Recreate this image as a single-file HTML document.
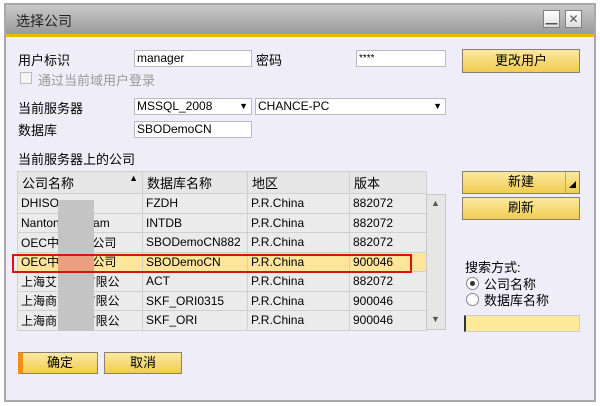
<!DOCTYPE html><html><head><meta charset="utf-8"><style>
*{box-sizing:border-box;margin:0;padding:0}
body{width:600px;height:406px;background:#fff;font-family:"Liberation Sans","Noto Sans CJK SC",sans-serif;font-size:13px;color:#000;position:relative;overflow:hidden}
.a{position:absolute}
#win{left:4px;top:3px;width:592px;height:399px;border:2px solid #a9a9a9;background:#efeef8}
#title{left:6px;top:5px;width:588px;height:29px;background:linear-gradient(#c9c9c9,#9a9a9a)}
#orange{left:6px;top:34px;width:588px;height:3px;background:#f2b400}
.tb{width:17px;height:18px;border:1px solid #808080;background:linear-gradient(#fff,#ddd);font-size:12px;text-align:center;line-height:16px;color:#555}
.in{background:#fff;border:1px solid #b9b9c9;font-size:12px;padding-left:2px;line-height:15px;height:17px}
.btn{border:1px solid #8a8070;background:linear-gradient(#fbe9a0,#f1cc50);text-align:center;font-size:13px;line-height:20px}
.lbl{font-size:13px}
table{border-collapse:collapse;font-size:12px}
td{border:1px solid #d0d0d0;background:#ebebeb;height:19.5px;padding-left:3px;white-space:nowrap;overflow:hidden}
th{border:1px solid #d0d0d0;background:#e6e6e6;height:22px;font-weight:normal;text-align:left;padding-left:4px;font-size:13px}
tr.h td{background:#fde59a}
.blur{background:#c4c4c4}
</style></head><body>
<div id="win" class="a"></div>
<div id="title" class="a"></div><div id="orange" class="a"></div>
<div class="a" style="left:16px;top:11px;font-size:14px;color:#222">选择公司</div>
<div class="a tb" style="left:543px;top:10px">▁</div>
<div class="a tb" style="left:565px;top:10px">✕</div>

<div class="a lbl" style="left:18px;top:50px">用户标识</div>
<div class="a in" style="left:134px;top:50px;width:118px">manager</div>
<div class="a lbl" style="left:256px;top:50px">密码</div>
<div class="a in" style="left:356px;top:50px;width:90px;font-size:10px">****</div>
<div class="a btn" style="left:462px;top:49px;width:118px;height:24px;line-height:22px">更改用户</div>
<div class="a" style="left:20px;top:72px;width:12px;height:12px;border:1px solid #bbb;background:#f4f4f4"></div>
<div class="a lbl" style="left:38px;top:70px;color:#999">通过当前域用户登录</div>

<div class="a lbl" style="left:18px;top:98px">当前服务器</div>
<div class="a in" style="left:134px;top:98px;width:118px">MSSQL_2008<span style="position:absolute;right:3px;font-size:9px">▼</span></div>
<div class="a in" style="left:255px;top:98px;width:191px">CHANCE-PC<span style="position:absolute;right:3px;font-size:9px">▼</span></div>
<div class="a lbl" style="left:18px;top:120px">数据库</div>
<div class="a in" style="left:134px;top:121px;width:118px">SBODemoCN</div>

<div class="a lbl" style="left:18px;top:149px">当前服务器上的公司</div>
<table class="a" style="left:17px;top:171px;width:409px;table-layout:fixed">
<colgroup><col style="width:125px"><col style="width:105px"><col style="width:102px"><col style="width:77px"></colgroup>
<tr><th>公司名称<span style="float:right;font-size:9px;margin-right:4px">▲</span></th><th>数据库名称</th><th>地区</th><th>版本</th></tr>
<tr><td>DHISO-</td><td>FZDH</td><td>P.R.China</td><td>882072</td></tr>
<tr><td>Nanton&nbsp;&nbsp;&nbsp;&nbsp;&nbsp;&nbsp;&nbsp;&nbsp;&nbsp;&nbsp;am</td><td>INTDB</td><td>P.R.China</td><td>882072</td></tr>
<tr><td>OEC中&nbsp;&nbsp;&nbsp;&nbsp;&nbsp;&nbsp;&nbsp;&nbsp;&nbsp;&nbsp;公司</td><td>SBODemoCN882</td><td>P.R.China</td><td>882072</td></tr>
<tr class="h"><td>OEC中&nbsp;&nbsp;&nbsp;&nbsp;&nbsp;&nbsp;&nbsp;&nbsp;&nbsp;&nbsp;公司</td><td>SBODemoCN</td><td>P.R.China</td><td>900046</td></tr>
<tr><td>上海艾&nbsp;&nbsp;&nbsp;&nbsp;&nbsp;&nbsp;&nbsp;&nbsp;有限公</td><td>ACT</td><td>P.R.China</td><td>882072</td></tr>
<tr><td>上海商&nbsp;&nbsp;&nbsp;&nbsp;&nbsp;&nbsp;&nbsp;&nbsp;有限公</td><td>SKF_ORI0315</td><td>P.R.China</td><td>900046</td></tr>
<tr><td>上海商&nbsp;&nbsp;&nbsp;&nbsp;&nbsp;&nbsp;&nbsp;&nbsp;有限公</td><td>SKF_ORI</td><td>P.R.China</td><td>900046</td></tr>
</table>
<div class="a blur" style="left:58px;top:200px;width:36px;height:131px"></div>
<div class="a" style="left:58px;top:255px;width:36px;height:17px;background:#eaa080"></div>
<div class="a" style="left:12px;top:254px;width:400px;height:19px;border:2px solid #e01010"></div>
<div class="a" style="left:426px;top:194px;width:20px;height:136px;background:#e6e6e6;border:1px solid #c8c8c8"></div>
<div class="a" style="left:431px;top:198px;font-size:9px;color:#555">▲</div>
<div class="a" style="left:431px;top:314px;font-size:9px;color:#555">▼</div>

<div class="a btn" style="left:462px;top:171px;width:118px;height:23px">新建<span style="position:absolute;right:0;top:0;width:14px;height:21px;border-left:1px solid #c8a850;font-size:7px;line-height:28px">◢</span></div>
<div class="a btn" style="left:462px;top:197px;width:118px;height:23px">刷新</div>
<div class="a lbl" style="left:465px;top:257px">搜索方式:</div>
<div class="a" style="left:466px;top:277px;width:13px;height:13px;border-radius:50%;border:1px solid #888;background:#fff"><div style="margin:3px;width:5px;height:5px;border-radius:50%;background:#333"></div></div>
<div class="a lbl" style="left:484px;top:274px">公司名称</div>
<div class="a" style="left:466px;top:293px;width:13px;height:13px;border-radius:50%;border:1px solid #888;background:#fff"></div>
<div class="a lbl" style="left:484px;top:290px">数据库名称</div>
<div class="a" style="left:464px;top:315px;width:116px;height:17px;background:#fdea9a;border:1px solid #ccc;border-left:2px solid #333"></div>

<div class="a btn" style="left:18px;top:352px;width:80px;height:22px;border-left:5px solid #f09010">确定</div>
<div class="a btn" style="left:104px;top:352px;width:78px;height:22px">取消</div>
</body></html>
